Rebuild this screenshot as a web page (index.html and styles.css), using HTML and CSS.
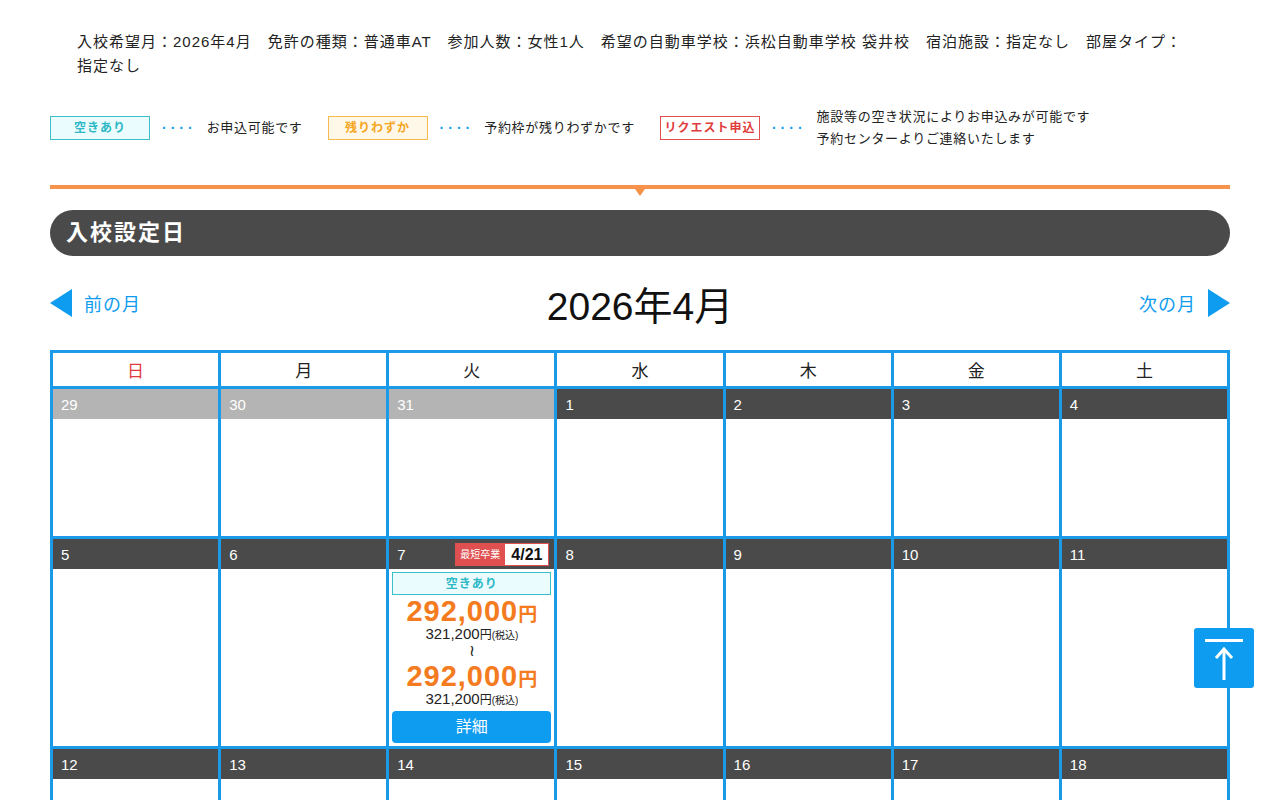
FILE: index.html
```html
<!DOCTYPE html>
<html lang="ja">
  <head>
    <meta charset="UTF-8" />
    <meta name="viewport" content="width=device-width, initial-scale=1.0" />
    <title>入校設定日</title>
    <link rel="stylesheet" href="styles.css">
  </head>
  <body>
    <div class="wrap">
      <p class="conditions">入校希望月：2026年4月　免許の種類：普通車AT　参加人数：女性1人　希望の自動車学校：浜松自動車学校 袋井校　宿泊施設：指定なし　部屋タイプ：<span class="nowrap">指定なし</span></p>

      <div class="legend">
        <span class="status status-ok">空きあり</span>
        <span class="leader">····</span>
        <span class="legend-text">お申込可能です</span>
        <span class="status status-few">残りわずか</span>
        <span class="leader">····</span>
        <span class="legend-text">予約枠が残りわずかです</span>
        <span class="status status-req">リクエスト申込</span>
        <span class="leader">····</span>
        <span class="legend-text">施設等の空き状況によりお申込みが可能です<br>予約センターよりご連絡いたします</span>
      </div>

      <div class="divider"></div>

      <h2 class="section-title">入校設定日</h2>

      <div class="month-nav">
        <a class="nav-link" href="#">
          <svg width="22" height="28" viewBox="0 0 22 28"><polygon points="22,0 22,28 0,14" fill="#0e9cf0"/></svg>
          前の月
        </a>
        <div class="month-title">2026年4月</div>
        <a class="nav-link" href="#">
          次の月
          <svg width="22" height="28" viewBox="0 0 22 28"><polygon points="0,0 0,28 22,14" fill="#0e9cf0"/></svg>
        </a>
      </div>

      <table class="calendar">
        <thead>
          <tr>
            <th class="sun">日</th><th>月</th><th>火</th><th>水</th><th>木</th><th>金</th><th>土</th>
          </tr>
        </thead>
        <tbody>
          <tr>
            <td><div class="day-bar past">29</div><div class="day-body"></div></td>
            <td><div class="day-bar past">30</div><div class="day-body"></div></td>
            <td><div class="day-bar past">31</div><div class="day-body"></div></td>
            <td><div class="day-bar">1</div><div class="day-body"></div></td>
            <td><div class="day-bar">2</div><div class="day-body"></div></td>
            <td><div class="day-bar">3</div><div class="day-body"></div></td>
            <td><div class="day-bar">4</div><div class="day-body"></div></td>
          </tr>
          <tr>
            <td><div class="day-bar">5</div><div class="day-body"></div></td>
            <td><div class="day-bar">6</div><div class="day-body"></div></td>
            <td>
              <div class="day-bar">7
                <span class="grad"><span class="grad-label">最短卒業</span><span class="grad-date">4/21</span></span>
              </div>
              <div class="day-body plan">
                <div class="status status-ok">空きあり</div>
                <div class="price">292,000<span class="yen">円</span></div>
                <div class="tax">321,200<span class="tax-yen">円</span><span class="tax-note">(税込)</span></div>
                <div class="tilde">≀</div>
                <div class="price">292,000<span class="yen">円</span></div>
                <div class="tax">321,200<span class="tax-yen">円</span><span class="tax-note">(税込)</span></div>
                <a class="detail-btn" href="#">詳細</a>
              </div>
            </td>
            <td><div class="day-bar">8</div><div class="day-body"></div></td>
            <td><div class="day-bar">9</div><div class="day-body"></div></td>
            <td><div class="day-bar">10</div><div class="day-body"></div></td>
            <td><div class="day-bar">11</div><div class="day-body"></div></td>
          </tr>
          <tr>
            <td><div class="day-bar">12</div><div class="day-body"></div></td>
            <td><div class="day-bar">13</div><div class="day-body"></div></td>
            <td><div class="day-bar">14</div><div class="day-body"></div></td>
            <td><div class="day-bar">15</div><div class="day-body"></div></td>
            <td><div class="day-bar">16</div><div class="day-body"></div></td>
            <td><div class="day-bar">17</div><div class="day-body"></div></td>
            <td><div class="day-bar">18</div><div class="day-body"></div></td>
          </tr>
          <tr>
            <td><div class="day-bar">19</div><div class="day-body"></div></td>
            <td><div class="day-bar">20</div><div class="day-body"></div></td>
            <td><div class="day-bar">21</div><div class="day-body"></div></td>
            <td><div class="day-bar">22</div><div class="day-body"></div></td>
            <td><div class="day-bar">23</div><div class="day-body"></div></td>
            <td><div class="day-bar">24</div><div class="day-body"></div></td>
            <td><div class="day-bar">25</div><div class="day-body"></div></td>
          </tr>
        </tbody>
      </table>
    </div>

    <a class="page-top" href="#">
      <svg width="60" height="60" viewBox="0 0 60 60">
        <rect x="11" y="11" width="38" height="3" fill="#fff"/>
        <path d="M30 22 V52 M22 30 L30 21 L38 30" stroke="#fff" stroke-width="3" fill="none"/>
      </svg>
    </a>
  </body>
</html>
```

FILE: styles.css
```css
body {
  margin: 0;
  font-family: "Liberation Sans", "Noto Sans CJK JP", sans-serif;
  color: #222;
  background: #fff;
}
.wrap {
  width: 1180px;
  margin-left: 50px;
}
.conditions {
  margin: 0;
  padding: 30px 27px 0;
  font-size: 15px;
  line-height: 24px;
  letter-spacing: 1px;
}
.nowrap {
  white-space: nowrap;
}
.legend {
  display: flex;
  align-items: center;
  margin-top: 28px;
  font-size: 13px;
  line-height: 22px;
}
.status {
  display: inline-block;
  box-sizing: border-box;
  width: 100px;
  height: 24px;
  line-height: 22px;
  text-align: center;
  font-size: 12px;
  font-weight: bold;
  letter-spacing: 1px;
  border: 1px solid;
}
.status-ok {
  color: #2db8c6;
  border-color: #3cc0c8;
  background: #eafcfd;
}
.status-few {
  color: #f5a623;
  border-color: #f5bb50;
  background: #fff7e8;
}
.status-req {
  color: #e03c3c;
  border-color: #e05050;
  background: #fff;
}
.leader {
  color: #0e9cf0;
  font-weight: bold;
  letter-spacing: 4px;
  margin: 0 10px 0 12px;
  font-size: 14px;
}
.legend-text {
  margin-right: 25px;
  letter-spacing: 0.7px;
}
.divider {
  position: relative;
  margin-top: 35px;
  border-top: 4px solid #f7924a;
}
.divider::after {
  content: "";
  position: absolute;
  left: 585px;
  top: 0;
  border-left: 5px solid transparent;
  border-right: 5px solid transparent;
  border-top: 7px solid #f7924a;
}
.section-title {
  margin: 21px 0 0;
  height: 46px;
  line-height: 46px;
  padding-left: 16px;
  background: #4a4a4a;
  border-radius: 23px;
  color: #fff;
  font-size: 22px;
  font-weight: bold;
  letter-spacing: 2px;
}
.month-nav {
  display: flex;
  justify-content: space-between;
  align-items: center;
  height: 50px;
  margin-top: 22px;
}
.nav-link {
  display: flex;
  align-items: center;
  gap: 12px;
  color: #0e9cf0;
  text-decoration: none;
  font-size: 18px;
  letter-spacing: 1px;
}
.month-title {
  font-size: 39px;
  color: #111;
}
.calendar {
  margin-top: 22px;
  width: 1180px;
  table-layout: fixed;
  border-collapse: collapse;
}
.calendar th,
.calendar td {
  border: 3px solid #1a9ae8;
  padding: 0;
  vertical-align: top;
}
.calendar th {
  height: 33px;
  font-size: 17px;
  font-weight: normal;
  color: #222;
  vertical-align: middle;
}
.calendar th.sun {
  color: #e03c3c;
}
.day-bar {
  display: flex;
  justify-content: space-between;
  align-items: center;
  height: 30px;
  padding: 0 5px 0 8px;
  background: #4a4a4a;
  color: #fff;
  font-size: 15px;
}
.day-bar.past {
  background: #b4b4b4;
}
.day-body {
  height: 117px;
}
.grad {
  display: flex;
  height: 23px;
}
.grad-label {
  background: #e05050;
  color: #fff;
  font-size: 10px;
  line-height: 23px;
  padding: 0 5px;
}
.grad-date {
  background: #fff;
  color: #111;
  font-weight: bold;
  font-size: 16px;
  line-height: 21px;
  border: 1px solid #e05050;
  border-left: none;
  padding: 0 6px;
}
.day-body.plan {
  height: auto;
  padding: 3px 3px 3px;
  text-align: center;
}
.plan .status {
  display: block;
  width: auto;
  height: 23px;
}
.price {
  height: 30px;
  color: #f47b20;
  font-weight: bold;
  font-size: 29px;
  line-height: 30px;
  letter-spacing: 1px;
  margin-top: 1px;
}
.yen {
  font-size: 19px;
  line-height: 1;
  letter-spacing: 0;
}
.tax {
  height: 16px;
  font-size: 15px;
  line-height: 16px;
  color: #222;
}
.tax-yen {
  font-size: 12px;
  line-height: 1;
}
.tax-note {
  font-size: 10px;
  line-height: 1;
}
.tilde {
  height: 18px;
  font-size: 16px;
  line-height: 18px;
}
.detail-btn {
  display: block;
  margin-top: 4px;
  height: 32px;
  line-height: 32px;
  background: #0e9cf0;
  color: #fff;
  border-radius: 4px;
  text-decoration: none;
  font-size: 16px;
}
.page-top {
  position: fixed;
  left: 1194px;
  top: 628px;
  width: 60px;
  height: 60px;
  background: #0e9cf0;
  border-radius: 3px;
}
.page-top svg {
  display: block;
}
```
